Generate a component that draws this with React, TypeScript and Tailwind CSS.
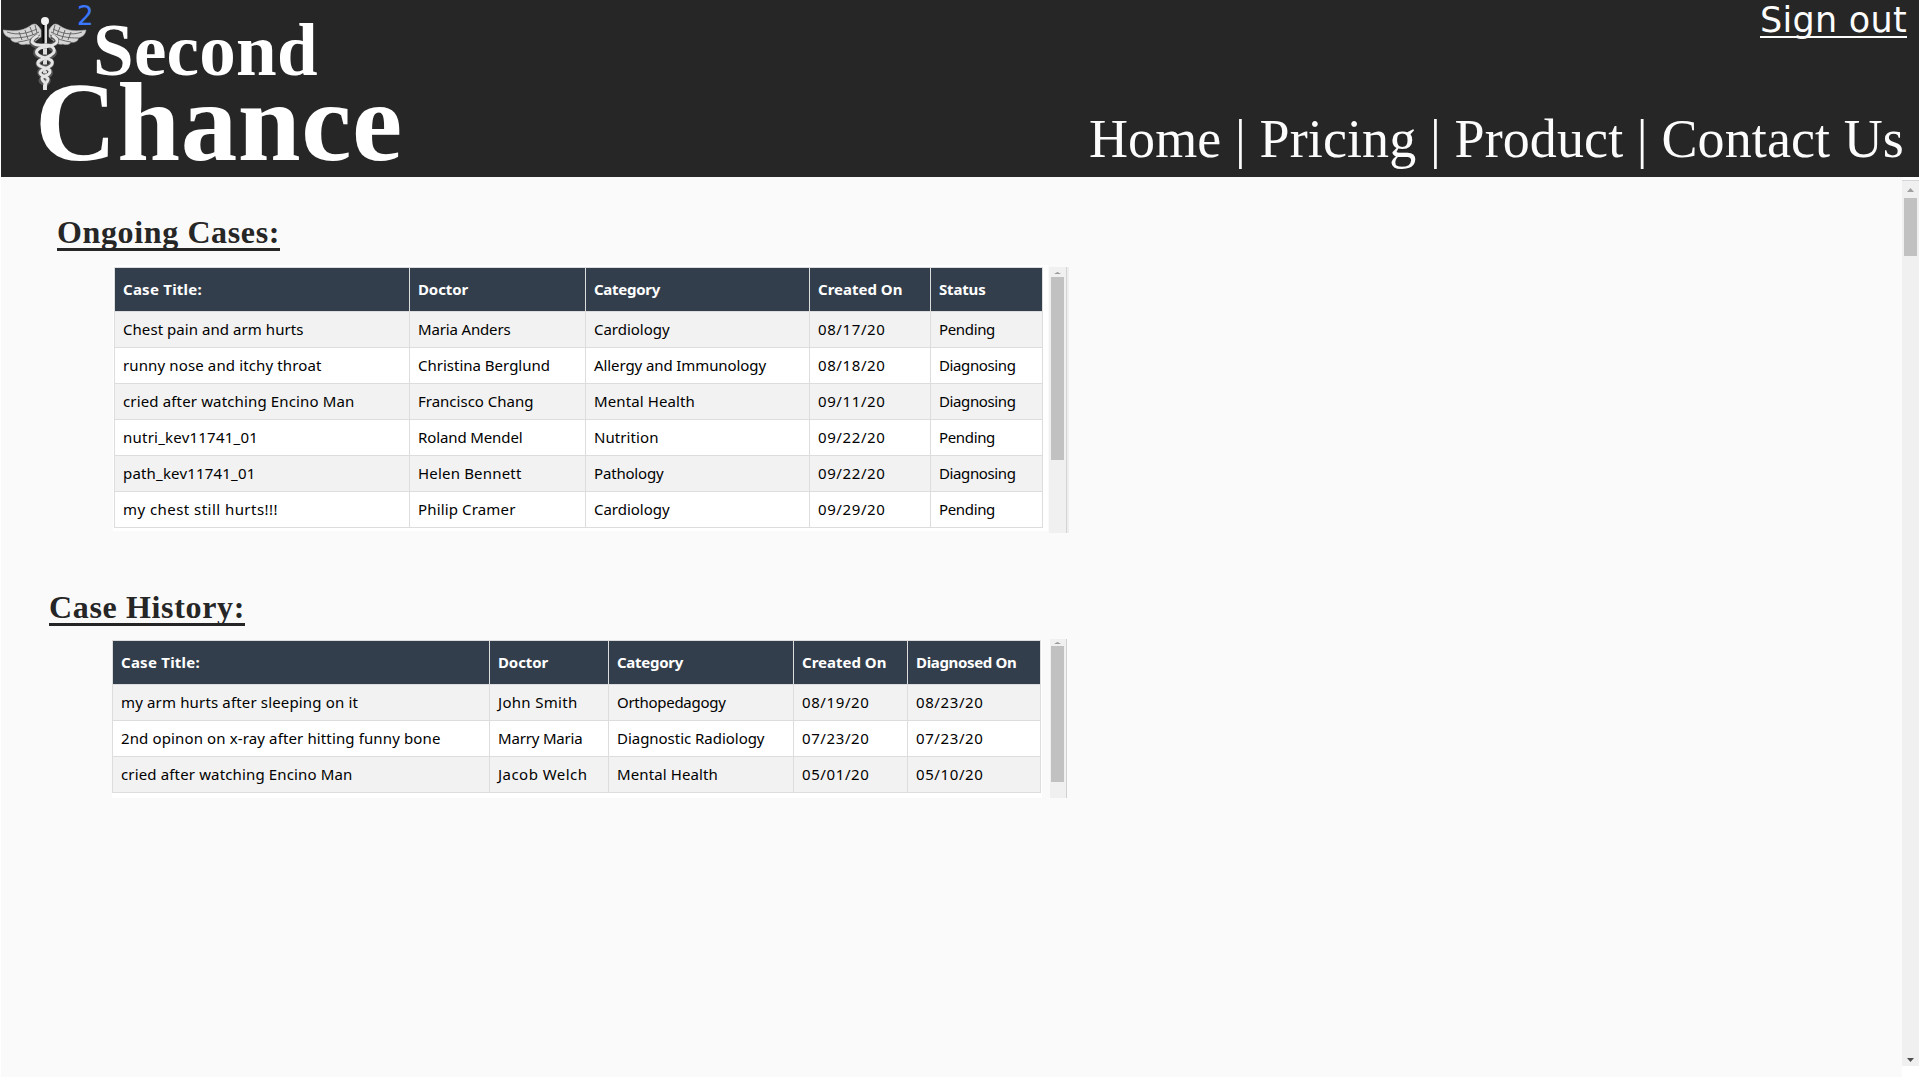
import { useLayoutEffect, useRef, useState } from "react";

type Cell = [text: string, width: number];

/** Single line of text whose tracking is tuned to fill a given width. */
function Fit({ text, width, className = "" }: { text: string; width: number; className?: string }) {
  const ref = useRef<HTMLSpanElement>(null);
  const [tracking, setTracking] = useState(0);
  useLayoutEffect(() => {
    if (ref.current) {
      const natural = ref.current.getBoundingClientRect().width - tracking * text.length;
      setTracking((width - natural) / text.length);
    }
  }, [text, width]);
  return (
    <span ref={ref} className={`inline-block whitespace-pre ${className}`} style={{ letterSpacing: tracking }}>
      {text}
    </span>
  );
}

const ongoingHead: Cell[] = [["Case Title:", 79], ["Doctor", 50], ["Category", 66], ["Created On", 84.5], ["Status", 46.5]];
const ongoing: Cell[][] = [
  [["Chest pain and arm hurts", 180.5], ["Maria Anders", 92.5], ["Cardiology", 75.5], ["08/17/20", 67.5], ["Pending", 56]],
  [["runny nose and itchy throat", 198.5], ["Christina Berglund", 132], ["Allergy and Immunology", 172], ["08/18/20", 67.5], ["Diagnosing", 76.5]],
  [["cried after watching Encino Man", 231.5], ["Francisco Chang", 115.5], ["Mental Health", 101], ["09/11/20", 67.5], ["Diagnosing", 76.5]],
  [["nutri_kev11741_01", 135], ["Roland Mendel", 104.5], ["Nutrition", 64.5], ["09/22/20", 67.5], ["Pending", 56]],
  [["path_kev11741_01", 132.5], ["Helen Bennett", 103.5], ["Pathology", 69.5], ["09/22/20", 67.5], ["Diagnosing", 76.5]],
  [["my chest still hurts!!!", 155], ["Philip Cramer", 97.5], ["Cardiology", 75.5], ["09/29/20", 67.5], ["Pending", 56]],
];

const historyHead: Cell[] = [["Case Title:", 79], ["Doctor", 50], ["Category", 66], ["Created On", 84.5], ["Diagnosed On", 100.5]];
const history: Cell[][] = [
  [["my arm hurts after sleeping on it", 237], ["John Smith", 79.5], ["Orthopedagogy", 108.5], ["08/19/20", 67.5], ["08/23/20", 67.5]],
  [["2nd opinon on x-ray after hitting funny bone", 319.5], ["Marry Maria", 84.5], ["Diagnostic Radiology", 147.5], ["07/23/20", 67.5], ["07/23/20", 67.5]],
  [["cried after watching Encino Man", 231.5], ["Jacob Welch", 89.5], ["Mental Health", 101], ["05/01/20", 67.5], ["05/10/20", 67.5]],
];

function CaseTable({ head, rows, cols }: { head: Cell[]; rows: Cell[][]; cols: string }) {
  return (
    <div className="border-l border-t border-[#dddddd] font-['Noto_Sans',sans-serif] text-[15px] text-black">
      <div className={`grid h-11 bg-[#333e4c] font-bold text-white ${cols}`}>
        {head.map(([t, w]) => (
          <div key={t} className="flex items-center border-b border-r border-[#dddddd] pl-2">
            <Fit text={t} width={w} />
          </div>
        ))}
      </div>
      {rows.map((row, i) => (
        <div key={i} className={`grid h-9 odd:bg-white even:bg-[#f2f2f2] ${cols}`}>
          {row.map(([t, w], j) => (
            <div key={j} className="flex items-center border-b border-r border-[#dddddd] pl-2">
              <Fit text={t} width={w} />
            </div>
          ))}
        </div>
      ))}
    </div>
  );
}

function Caduceus() {
  return (
    <svg viewBox="0 0 84 76" className="h-[76px] w-[84px]" fill="none">
      <g fill="#d6d6d6" stroke="#a8a8a8" strokeWidth=".6">
        <path d="M38 13C34 6 31 6 27 9C18 15 10 14 0 13C1 19 5 20 8 21C7 24 12 26 15 25C16 28 21 28 23 27C29 29 34 22 38 20Z" />
        <path d="M46 13C50 6 53 6 57 9C66 15 74 14 83 13C82 19 78 20 75 21C76 24 71 26 68 25C67 28 62 28 60 27C54 29 49 22 46 20Z" />
      </g>
      <g stroke="#5c5c5c" strokeWidth=".9">
        <path d="M4 15C15 19 25 16 34 12M8 21C18 21 27 20 36 15M15 25C23 24 30 22 37 18M27 10L30 18M22 13L25 22M16 15L19 23M32 8L34 16" />
        <path d="M79 15C68 19 58 16 50 12M75 21C66 21 57 20 48 15M68 25C61 24 54 22 47 18M57 10L54 18M62 13L59 22M68 15L65 23M52 8L50 16" />
      </g>
      <path d="M42 7V73" stroke="#dedede" strokeWidth="4" />
      <path d="M40.5 8V28" stroke="#050505" strokeWidth="2" />
      <g stroke="#555" strokeWidth="5" strokeLinecap="round">
        <path d="M33 20C25 25 29 30 42 29C56 28 56 22 50 20" />
        <path d="M36 31C29 36 34 40 42 40C52 40 54 35 48 31" />
        <path d="M38 43C32 47 36 50 42 50C49 50 51 46 46 42" />
        <path d="M39 52C34 56 38 59 42 59C48 59 49 55 45 52" />
        <path d="M40 61C36 64 39 66 42 66C46 66 46 63 44 61" />
      </g>
      <g stroke="#e4e4e4" strokeWidth="3" strokeLinecap="round">
        <path d="M34 19C25 24 29 29 42 28C50 28 55 34 48 38C43 42 34 42 35 47C37 52 48 50 47 55C46 60 38 58 39 62C40 66 45 65 42 71" />
        <path d="M50 19C58 24 54 28 42 30C33 31 31 36 37 39C43 42 51 42 49 47C47 52 37 51 37 56C38 60 46 59 45 63C44 67 40 66 42 71" />
      </g>
      <circle cx="42" cy="4" r="4" fill="#f2f2f2" />
    </svg>
  );
}

function Heading({ text, width }: { text: string; width: number }) {
  return (
    <h2 className="h-10 border-b-[3px] border-[#262626] font-['Liberation_Serif',serif] text-[32px] font-bold leading-[42px] text-[#262626]">
      <Fit text={text} width={width} />
    </h2>
  );
}

function TableScrollbar({ className, thumb }: { className: string; thumb: string }) {
  return (
    <div className={`flex flex-col bg-[#f0f0f0] ${className}`}>
      <svg viewBox="0 0 7 2" className="ml-[3px] h-0.5 w-[7px] shrink-0">
        <path d="M0 2L3.5 0L7 2Z" fill="#999" />
      </svg>
      <div className={`w-[13px] bg-[#c1c1c1] ${thumb}`} />
    </div>
  );
}

export default function App() {
  return (
    <div className="flex h-[1080px] w-[1920px] flex-col overflow-hidden bg-white px-px pb-[3px]">
      <header className="flex h-[177px] shrink-0 justify-between bg-[#262626] font-['Liberation_Serif',serif] text-[#fcfcfc]">
        <div className="relative w-[420px] font-bold text-white">
          <div className="absolute left-[2px] top-[17px]">
            <Caduceus />
          </div>
          <span className="absolute left-[76px] top-px font-['DejaVu_Sans',sans-serif] text-[26px] font-normal leading-[31px] text-[#3b78ff]">2</span>
          <span className="absolute left-[92px] top-[23px] text-[73px] leading-[56px] tracking-[0.3px]">Second</span>
          <span className="absolute left-[34px] top-[80px] text-[113px] leading-[84px] tracking-[0.6px]">Chance</span>
        </div>
        <div className="flex flex-col items-end justify-between">
          <a className="mr-3 mt-0.5 h-9 border-b-2 border-[#fcfcfc] font-['DejaVu_Sans',sans-serif] text-[35px] leading-[36px]">
            <Fit text="Sign out" width={147} />
          </a>
          <nav className="mb-2 mr-[15px] text-[54px] leading-[60px]">
            <Fit text="Home | Pricing | Product | Contact Us" width={815} />
          </nav>
        </div>
      </header>
      <div className="flex h-[900px]">
        <main className="flex w-[1901px] flex-col items-start bg-[#fafafa]">
          <div className="ml-14 mt-[34px] h-10">
            <Heading text="Ongoing Cases:" width={223} />
          </div>
          <section className="ml-[112px] mt-3.5 flex items-start">
            <div className="h-[266px] w-[935px] bg-white pl-px pr-[5px] pt-0.5">
              <CaseTable head={ongoingHead} rows={ongoing} cols="grid-cols-[295px_176px_224px_121px_112px]" />
            </div>
            <TableScrollbar className="ml-px mt-0.5 h-[266px] w-[17px] pl-0.5 pt-[5px]" thumb="mt-[3px] h-[183px]" />
            <div className="mt-0.5 h-[266px] w-[3px] border-l border-[#d4d4d4] bg-[#eeeeee]" />
          </section>
          <div className="ml-12 mt-[53px] h-10">
            <Heading text="Case History:" width={196} />
          </div>
          <section className="ml-[111px] mt-[13px] flex items-start">
            <div className="mt-px h-[158px] w-[930px] bg-white">
              <div className="w-[929px]">
                <CaseTable head={historyHead} rows={history} cols="grid-cols-[377px_119px_185px_114px_133px]" />
              </div>
            </div>
            <TableScrollbar className="ml-2 h-[159px] w-4 pl-px pt-[3px]" thumb="mt-0.5 h-[136px]" />
            <div className="h-[159px] w-px bg-[#d0d0d0]" />
          </section>
        </main>
        <div className="mt-[3px] flex h-[886px] w-[17px] flex-col items-center border-t border-[#d5d5da] bg-[#f0f0f0]">
          <svg viewBox="0 0 7 4" className="mt-[7px] h-1 w-[7px]">
            <path d="M0 4L3.5 0L7 4Z" fill="#a0a0a0" />
          </svg>
          <div className="mt-1.5 h-[58px] w-[13px] bg-[#c1c1c1]" />
          <svg viewBox="0 0 7 4" className="mb-1 mt-auto h-1 w-[7px]">
            <path d="M0 0L3.5 4L7 0Z" fill="#505050" />
          </svg>
        </div>
      </div>
    </div>
  );
}
